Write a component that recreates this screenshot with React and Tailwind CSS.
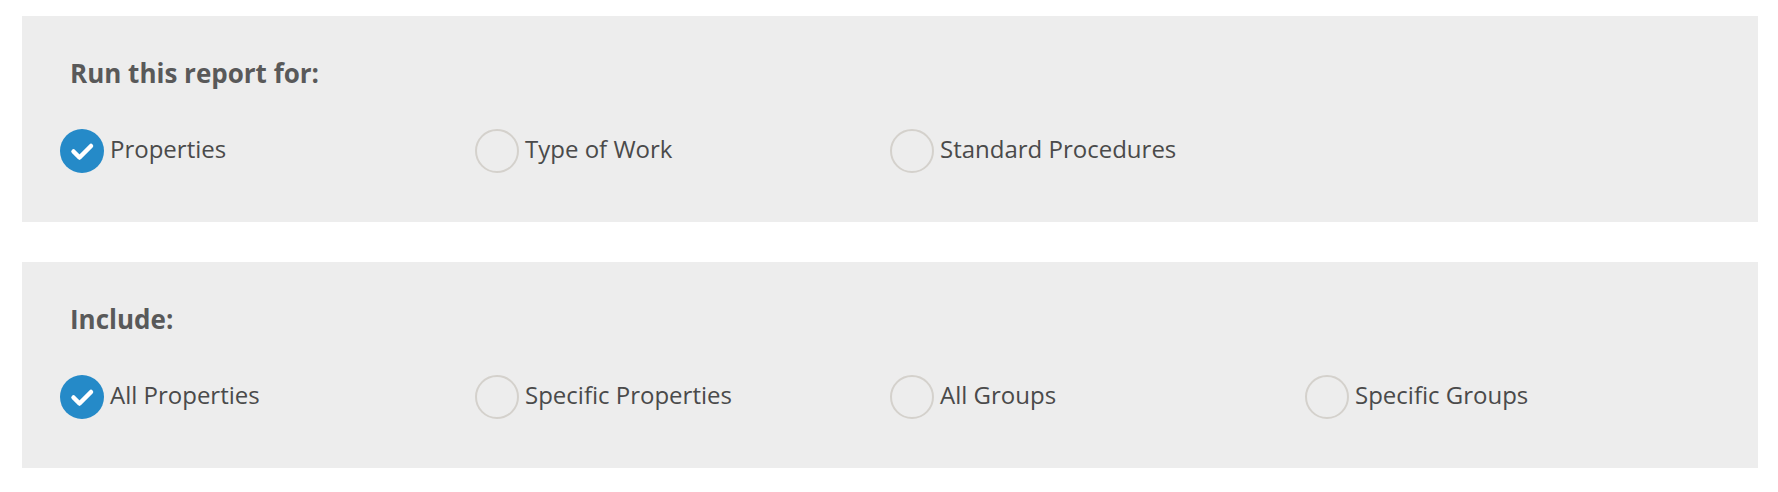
import React from "react";

function Check({ checked }) {
  if (checked) {
    return (
      <span className="flex h-[44px] w-[44px] shrink-0 items-center justify-center rounded-full bg-[#258ac8]">
        <svg width="44" height="44" viewBox="0 0 44 44">
          <path d="M13.5 22.5 L19.5 28.5 L31 17" fill="none" stroke="#ffffff" strokeWidth="4.5" strokeLinecap="round" strokeLinejoin="round" />
        </svg>
      </span>
    );
  }
  return <span className="block h-[44px] w-[44px] shrink-0 rounded-full border-2 border-[#d4d1cc] bg-[#ededed]" />;
}

function Option({ label, checked }) {
  return (
    <div className="flex items-start gap-[6px]">
      <Check checked={checked} />
      <span className="text-[24px] leading-[40px] text-[#4a4a4a]">{label}</span>
    </div>
  );
}

function Panel({ title, options }) {
  return (
    <section className="h-[206px] bg-[#ededed] px-[38px] pt-[39px]">
      <h2 className="ml-[10px] text-[26px] font-bold leading-[36px] text-[#595959]">{title}</h2>
      <div className="mt-[38px] grid grid-cols-4">
        {options.map((o) => (
          <Option key={o.label} label={o.label} checked={o.checked} />
        ))}
      </div>
    </section>
  );
}

export default function App() {
  return (
    <div
      className="flex min-h-[492px] flex-col gap-[40px] bg-white pl-[22px] pr-[20px] pt-[16px]"
      style={{ fontFamily: '"Open Sans", "Liberation Sans", sans-serif' }}
    >
      <Panel
        title="Run this report for:"
        options={[
          { label: "Properties", checked: true },
          { label: "Type of Work" },
          { label: "Standard Procedures" },
        ]}
      />
      <Panel
        title="Include:"
        options={[
          { label: "All Properties", checked: true },
          { label: "Specific Properties" },
          { label: "All Groups" },
          { label: "Specific Groups" },
        ]}
      />
    </div>
  );
}
